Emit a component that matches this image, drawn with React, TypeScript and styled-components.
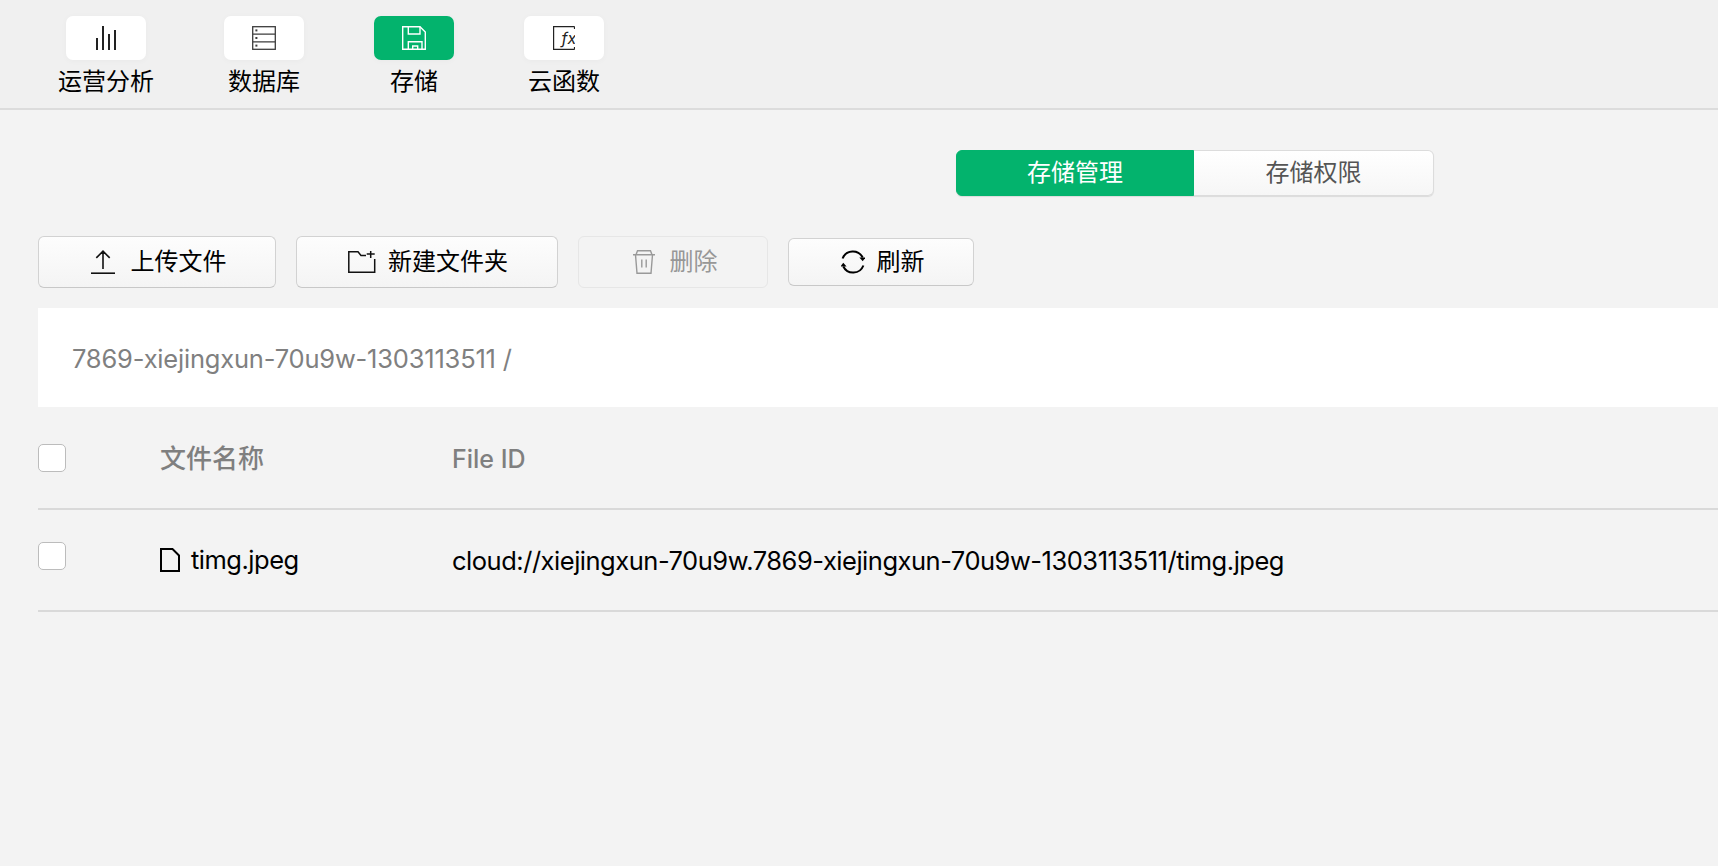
import React from "react";
import styled, { createGlobalStyle } from "styled-components";

const FONT = `Inter, "Noto Sans CJK SC", sans-serif`;
const GREEN = "#03b36d";

const Global = createGlobalStyle`
  html, body { margin: 0; padding: 0; height: 100%; background: #f3f3f3; overflow: hidden; }
  body { font-family: ${FONT}; color: #000; }
  #root { height: 100%; }
`;

const Page = styled.div`
  width: 1718px;
  height: 866px;
  background: #f3f3f3;
  overflow: hidden;
`;

const Header = styled.header`
  display: flex;
  gap: 70px;
  box-sizing: border-box;
  height: 110px;
  padding: 16px 0 0 58px;
  background: #f0f0f0;
  border-bottom: 2px solid #dcdcdc;
`;

const NavItem = styled.div`
  display: flex;
  flex-direction: column;
  align-items: center;
  min-width: 80px;
`;

const NavCard = styled.div<{ $active?: boolean }>`
  display: flex;
  align-items: center;
  justify-content: center;
  width: 80px;
  height: 44px;
  border-radius: 7px;
  background: ${(p) => (p.$active ? GREEN : "#fff")};
  color: ${(p) => (p.$active ? "#fff" : "#222")};
  box-shadow: 0 1px 6px rgba(0, 0, 0, 0.03);
`;

const NavLabel = styled.span`
  margin-top: 9px;
  font-size: 24px;
  line-height: 26px;
  white-space: nowrap;
`;

const Content = styled.main`
  padding-left: 38px;
`;

const SegmentRow = styled.div`
  display: flex;
  padding: 40px 0 0 918px;
`;

const Segment = styled.div<{ $active?: boolean; $side: "left" | "right" }>`
  display: flex;
  align-items: center;
  justify-content: center;
  box-sizing: border-box;
  height: 46px;
  width: ${(p) => (p.$side === "left" ? 238 : 240)}px;
  font-size: 24px;
  line-height: 1;
  background: ${(p) => (p.$active ? GREEN : "linear-gradient(#ffffff, #f6f6f6)")};
  color: ${(p) => (p.$active ? "#fff" : "#555")};
  border: 1px solid ${(p) => (p.$active ? GREEN : "#dcdcdc")};
  border-left-width: ${(p) => (p.$active ? 1 : 0)}px;
  border-radius: ${(p) => (p.$side === "left" ? "6px 0 0 6px" : "0 6px 6px 0")};
  box-shadow: 0 1px 1px rgba(0, 0, 0, 0.1);
`;

const Toolbar = styled.div`
  display: flex;
  align-items: center;
  gap: 20px;
  height: 52px;
  margin-top: 40px;
`;

const Button = styled.button<{ $width: number; $gap: number; $left: number; $height?: number; $disabled?: boolean }>`
  display: flex;
  align-items: center;
  justify-content: center;
  gap: ${(p) => p.$gap}px;
  box-sizing: border-box;
  width: ${(p) => p.$width}px;
  height: ${(p) => p.$height ?? 52}px;
  padding: 0 0 0 ${(p) => p.$left}px;
  font-family: ${FONT};
  font-size: 24px;
  line-height: 1;
  color: ${(p) => (p.$disabled ? "#979797" : "#000")};
  background: ${(p) => (p.$disabled ? "#f3f3f3" : "linear-gradient(#fdfdfd, #f4f4f4)")};
  border: 1px solid ${(p) => (p.$disabled ? "#e6e6e6" : "#d2d2d2")};
  border-bottom-color: ${(p) => (p.$disabled ? "#e6e6e6" : "#c8c8c8")};
  border-radius: 6px;
`;

const ButtonLabel = styled.span`
  margin-bottom: 1px;
`;

const Breadcrumb = styled.div`
  display: flex;
  align-items: center;
  height: 99px;
  margin-top: 20px;
  padding: 2px 0 0 34px;
  box-sizing: border-box;
  background: #fff;
  font-size: 25.5px;
  letter-spacing: -0.2px;
  line-height: 1;
  color: #808080;
`;

const Row = styled.div<{ $height: number }>`
  display: grid;
  grid-template-columns: 122px 292px 1fr;
  align-items: center;
  box-sizing: border-box;
  height: ${(p) => p.$height}px;
  border-bottom: 2px solid #d9d9d9;
`;

const Checkbox = styled.span<{ $shift: number }>`
  display: block;
  box-sizing: border-box;
  width: 28px;
  height: 28px;
  margin-top: ${(p) => p.$shift}px;
  background: #fff;
  border: 1px solid #bcbcbc;
  border-radius: 5px;
`;

const HeadCell = styled.span`
  padding-top: 3px;
  font-size: 25px;
  line-height: 1;
  font-weight: 500;
  color: #7f7f7f;
`;

const HeadCellCjk = styled(HeadCell)`
  font-size: 26px;
`;

const NameCell = styled.span`
  display: flex;
  align-items: center;
  gap: 11px;
  font-size: 25.5px;
  letter-spacing: -0.5px;
  line-height: 1;
`;

const IdCell = styled.span`
  padding-top: 2px;
  font-size: 25.5px;
  letter-spacing: -0.48px;
  line-height: 1;
  white-space: nowrap;
`;

const BarsIcon = () => (
  <svg width="24" height="24" viewBox="0 0 24 24" fill="currentColor">
    <rect x="2" y="12" width="2" height="12" />
    <rect x="8" y="0" width="2" height="24" />
    <rect x="14" y="8" width="2" height="16" />
    <rect x="20" y="4" width="2" height="20" />
  </svg>
);

const DbIcon = () => (
  <svg width="24" height="24" viewBox="0 0 24 24" fill="none" stroke="#3c3c3c" strokeWidth="1.3">
    <rect x="0.7" y="0.7" width="22.6" height="22.6" />
    <path d="M1 8.2h22M1 15.8h22" />
    <rect x="3.4" y="3.4" width="2" height="2" fill="#3c3c3c" stroke="none" />
    <rect x="3.4" y="11" width="2" height="2" fill="#3c3c3c" stroke="none" />
    <rect x="3.4" y="18.6" width="2" height="2" fill="#3c3c3c" stroke="none" />
  </svg>
);

const SaveIcon = () => (
  <svg width="24" height="24" viewBox="0 0 24 24" fill="none" stroke="#fff" strokeWidth="1.4">
    <path d="M0.7 0.7H18L23.3 6V23.3H0.7Z" />
    <path d="M6.3 0.7V8H18V0.7" />
    <path d="M6.3 23.3V15.7H20V23.3" />
    <path d="M10.7 23.3V20H15.7V23.3" />
  </svg>
);

const FxText = styled.text`
  font-family: Inter, sans-serif;
  font-style: italic;
  font-size: 16px;
  fill: #222;
  stroke: none;
`;

const FxIcon = () => (
  <svg width="22" height="24" viewBox="0 0 22 24" fill="none" stroke="#222" strokeWidth="1.2">
    <path d="M21.5 0.6H0.6V23.4H21.5M21.5 0.6V3M21.5 23.4V21" />
    <FxText x="8.5" y="17.5">fx</FxText>
  </svg>
);

const UploadIcon = () => (
  <svg width="24" height="24" viewBox="0 0 24 24" fill="none" stroke="#111" strokeWidth="1.6">
    <path d="M0 23.2H24" />
    <path d="M12 19V1.2M5.3 7.9L12 1.2L18.7 7.9" />
  </svg>
);

const FolderIcon = () => (
  <svg width="28" height="23" viewBox="0 0 28 23" fill="none" stroke="#111" strokeWidth="1.5">
    <path d="M26.7 8V21.3H0.8V0.8H10L13 4.5H18" />
    <path d="M22.7 -1V7M18.7 3H26.7" />
  </svg>
);

const TrashIcon = () => (
  <svg width="22" height="24" viewBox="0 0 22 24" fill="none" stroke="#999" strokeWidth="1.4">
    <path d="M0 4.7H22M3 4.7L4.5 0.8H17.5L19 4.7" />
    <path d="M2.5 4.7L4 23.2H18L19.5 4.7" />
    <path d="M8.8 9.5V17.5M13.2 9.5V17.5" />
  </svg>
);

const RefreshIcon = () => (
  <svg width="24" height="26" viewBox="0 0 24 26" fill="none" stroke="#000" strokeWidth="2">
    <path d="M1.6 9.5A11 11 0 0 1 21.7 8.5" />
    <path d="M22.4 16.5A11 11 0 0 1 2.3 17.5" />
    <path d="M18.4 8.5H24.6L21.7 12.2Z" fill="#000" stroke="none" />
    <path d="M-0.6 17.5H5.6L2.3 13.8Z" fill="#000" stroke="none" />
  </svg>
);

const FileIcon = () => (
  <svg width="20" height="24" viewBox="0 0 20 24" fill="none" stroke="#000" strokeWidth="2">
    <path d="M1 1H12.5L19 7.5V23H1Z" />
  </svg>
);

export default function App() {
  return (
    <Page>
      <Global />
      <Header>
        <NavItem>
          <NavCard><BarsIcon /></NavCard>
          <NavLabel>运营分析</NavLabel>
        </NavItem>
        <NavItem>
          <NavCard><DbIcon /></NavCard>
          <NavLabel>数据库</NavLabel>
        </NavItem>
        <NavItem>
          <NavCard $active><SaveIcon /></NavCard>
          <NavLabel>存储</NavLabel>
        </NavItem>
        <NavItem>
          <NavCard><FxIcon /></NavCard>
          <NavLabel>云函数</NavLabel>
        </NavItem>
      </Header>
      <Content>
        <SegmentRow>
          <Segment $active $side="left">存储管理</Segment>
          <Segment $side="right">存储权限</Segment>
        </SegmentRow>
        <Toolbar>
          <Button $width={238} $gap={16} $left={3}><UploadIcon /><ButtonLabel>上传文件</ButtonLabel></Button>
          <Button $width={262} $gap={12} $left={2}><FolderIcon /><ButtonLabel>新建文件夹</ButtonLabel></Button>
          <Button $width={190} $gap={15} $left={4} $disabled><TrashIcon /><ButtonLabel>删除</ButtonLabel></Button>
          <Button $width={186} $gap={12} $left={3} $height={48}><RefreshIcon /><ButtonLabel>刷新</ButtonLabel></Button>
        </Toolbar>
        <Breadcrumb>7869-xiejingxun-70u9w-1303113511 /</Breadcrumb>
        <Row $height={103}>
          <Checkbox $shift={0} />
          <HeadCellCjk>文件名称</HeadCellCjk>
          <HeadCell>File ID</HeadCell>
        </Row>
        <Row $height={102}>
          <Checkbox $shift={-8} />
          <NameCell><FileIcon />timg.jpeg</NameCell>
          <IdCell>cloud://xiejingxun-70u9w.7869-xiejingxun-70u9w-1303113511/timg.jpeg</IdCell>
        </Row>
      </Content>
    </Page>
  );
}
